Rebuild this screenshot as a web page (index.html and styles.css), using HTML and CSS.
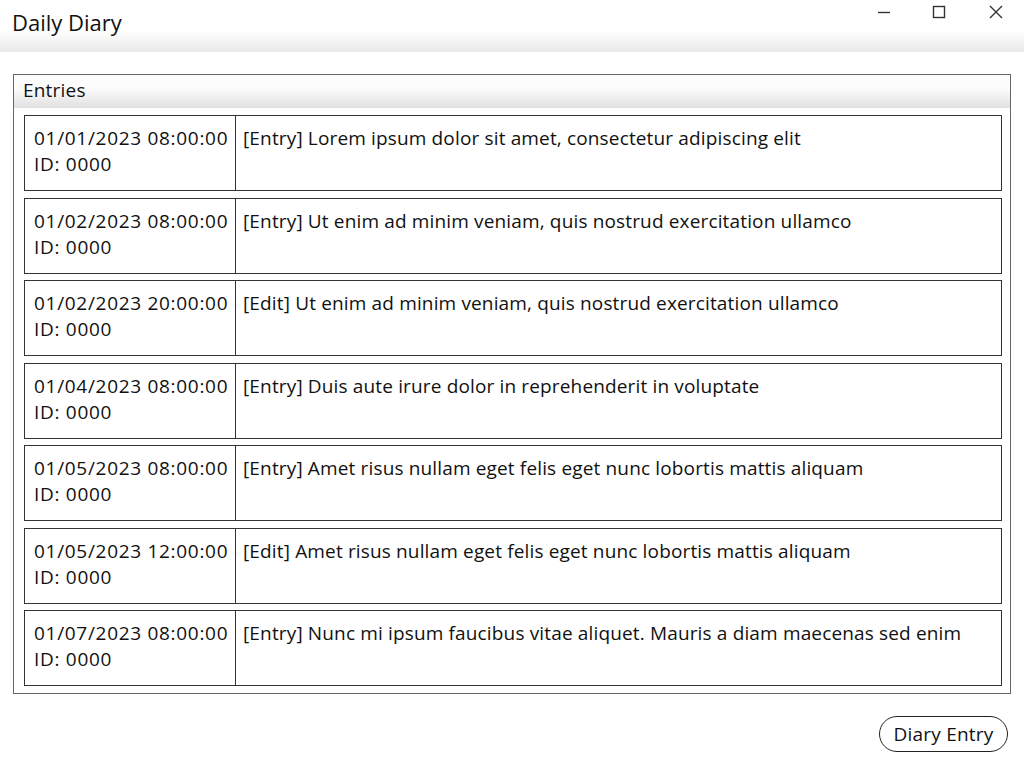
FILE: index.html
```html
<!DOCTYPE html>
<html>
<head>
<meta charset="utf-8">
<link rel="stylesheet" href="styles.css">
</head>
<body>
<div class="titlebar">
  <div class="title">Daily Diary</div>
  <div class="controls">
    <svg class="ctl ctl-min" width="16" height="16" viewBox="0 0 16 16"><path d="M2 8.5H14" stroke="#333" stroke-width="1.4" fill="none"/></svg>
    <svg class="ctl ctl-max" width="16" height="16" viewBox="0 0 16 16"><rect x="2.5" y="2.5" width="11" height="11" stroke="#333" stroke-width="1.4" fill="none"/></svg>
    <svg class="ctl ctl-close" width="16" height="16" viewBox="0 0 16 16"><path d="M2 2L14 14M14 2L2 14" stroke="#333" stroke-width="1.4" fill="none"/></svg>
  </div>
</div>
<div class="panel">
  <div class="panel-head">Entries</div>
  <div class="list">
    <div class="row"><div class="meta"><div>01/01/2023 08:00:00</div><div>ID: 0000</div></div><div class="text">[Entry] Lorem ipsum dolor sit amet, consectetur adipiscing elit</div></div>
    <div class="row"><div class="meta"><div>01/02/2023 08:00:00</div><div>ID: 0000</div></div><div class="text">[Entry] Ut enim ad minim veniam, quis nostrud exercitation ullamco</div></div>
    <div class="row"><div class="meta"><div>01/02/2023 20:00:00</div><div>ID: 0000</div></div><div class="text">[Edit] Ut enim ad minim veniam, quis nostrud exercitation ullamco</div></div>
    <div class="row"><div class="meta"><div>01/04/2023 08:00:00</div><div>ID: 0000</div></div><div class="text">[Entry] Duis aute irure dolor in reprehenderit in voluptate</div></div>
    <div class="row"><div class="meta"><div>01/05/2023 08:00:00</div><div>ID: 0000</div></div><div class="text">[Entry] Amet risus nullam eget felis eget nunc lobortis mattis aliquam</div></div>
    <div class="row"><div class="meta"><div>01/05/2023 12:00:00</div><div>ID: 0000</div></div><div class="text">[Edit] Amet risus nullam eget felis eget nunc lobortis mattis aliquam</div></div>
    <div class="row"><div class="meta"><div>01/07/2023 08:00:00</div><div>ID: 0000</div></div><div class="text">[Entry] Nunc mi ipsum faucibus vitae aliquet. Mauris a diam maecenas sed enim</div></div>
  </div>
</div>
<div class="footer">
  <button class="btn">Diary Entry</button>
</div>
</body>
</html>
```
FILE: styles.css
```css
html, body {
  margin: 0;
  padding: 0;
  background: #fff;
  font-family: "Open Sans", "Noto Sans", sans-serif;
  color: #111;
}
.titlebar {
  height: 52px;
  display: flex;
  justify-content: space-between;
  background: linear-gradient(to bottom, #fff 0px, #fff 30px, #e9e9e9 52px);
}
.title {
  font-size: 22px;
  padding: 8px 0 0 12px;
  line-height: 28px;
}
.controls {
  display: flex;
  padding: 4px 20px 0 0;
  align-items: flex-start;
}
.ctl-max {
  margin-left: 38.5px;
}
.ctl-close {
  margin-left: 41.5px;
}
.panel {
  margin: 22px 13px 0 13px;
  border: 1px solid #666;
}
.panel-head {
  height: 33px;
  line-height: 31px;
  padding-left: 9px;
  font-size: 19px;
  letter-spacing: 0.2px;
  background: linear-gradient(to bottom, #fcfcfc 40%, #e0e0e0);
}
.list {
  padding: 7px 8px 7px 10px;
  display: flex;
  flex-direction: column;
  gap: 6.5px;
}
.row {
  height: 76px;
  box-sizing: border-box;
  border: 1px solid #333;
  display: flex;
}
.meta {
  width: 211px;
  box-sizing: border-box;
  border-right: 1px solid #333;
  padding: 9px 0 0 9px;
  font-size: 19px;
  letter-spacing: 0.7px;
  line-height: 26px;
  white-space: nowrap;
}
.text {
  padding: 9px 0 0 7px;
  font-size: 19px;
  letter-spacing: 0.15px;
  line-height: 26px;
  white-space: nowrap;
}
.footer {
  display: flex;
  justify-content: flex-end;
  padding: 22px 16px 0 0;
}
.btn {
  font-family: inherit;
  font-size: 19px;
  letter-spacing: 0.2px;
  color: #111;
  background: #fff;
  border: 1px solid #222;
  border-radius: 18px;
  height: 36px;
  width: 129px;
  padding: 0;
}
```
